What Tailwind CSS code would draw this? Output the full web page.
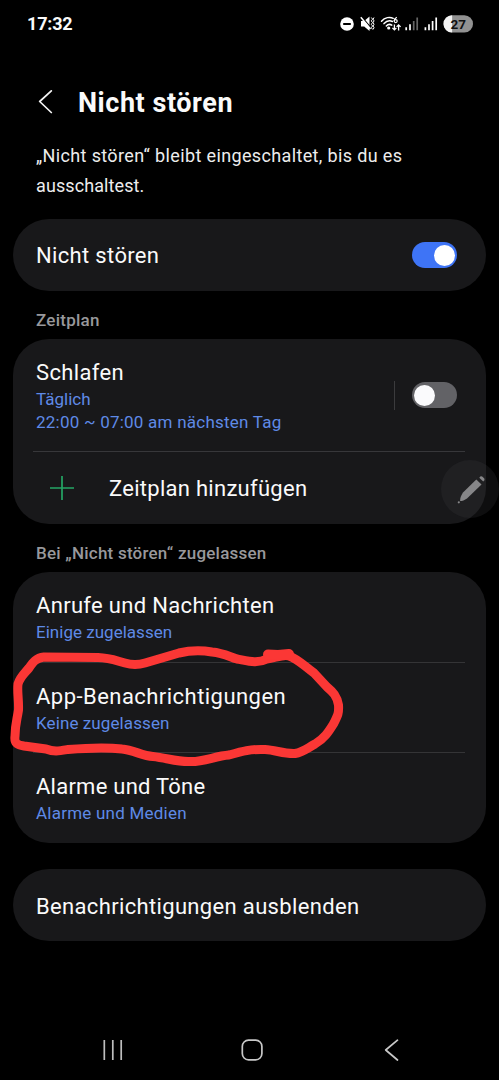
<!DOCTYPE html>
<html lang="de">
<head>
<meta charset="utf-8">
<title>Nicht stören</title>
<script src="https://cdn.jsdelivr.net/npm/@tailwindcss/browser@4"></script>
</head>
<body class="bg-black">
<div class="relative flex h-[1080px] w-[499px] flex-col overflow-hidden bg-black font-[Roboto,sans-serif] text-[#fafafa]">
  <!-- Status bar -->
  <header class="flex h-12 shrink-0 items-center justify-between pr-[25px] pl-[27px]">
    <span class="text-[18px] leading-6 font-bold tracking-[-0.2px]">17:32</span>
    <svg class="h-10 w-[134px]" viewBox="340 4 134 40" fill="none">
      <circle cx="347" cy="24" r="6.8" fill="#fff"/>
      <path d="M343.2 24h7.6" stroke="#000" stroke-width="2"/>
      <path d="M361 21h3.200L369.500 16.500v14.500l-5.300-4.500H361z" fill="#fff"/>
      <path d="M361.800 16.800 371.500 28.500" stroke="#000" stroke-width="1.300"/>
      <path d="M360.800 17.200 370.500 29" stroke="#fff" stroke-width="1.500"/>
      <path d="M371.300 17.500l1.300 1.700-1.300 1.700 1.300 1.700-1.300 1.700 1.300 1.700-1.300 1.700 1.300 1.700M374 17.500l-.9 1.700.9 1.700-.9 1.700.9 1.700-.9 1.700.9 1.700-.9 1.700" stroke="#fff" stroke-width="1"/>
      <path d="M381.5 21.2C384.8 17.2 390 16.6 393.2 18.3M384 23.6C386.5 20.8 390 20.3 392.5 21.5M386.3 26C388 24.2 390 24 391.8 25.2" stroke="#fff" stroke-width="1.5" stroke-linecap="round"/>
      <circle cx="388.7" cy="28" r="1.6" fill="#fff"/>
      <path d="M396.8 17.3C394.8 18.3 394.1 19.6 394.1 21" stroke="#fff" stroke-width="1.2"/>
      <circle cx="395.7" cy="21.1" r="1.5" stroke="#fff" stroke-width="1.2"/>
      <path d="M394.4 24.5v5.4m-2-2 2 2 2-2M398.6 30.5v-5.6m-2 2 2-2 2 2" stroke="#fff" stroke-width="1.3"/>
      <path d="M406.2 27.3v3M410 24.3v6" stroke="#fff" stroke-width="1.7"/>
      <path d="M413.7 21v9.3M417.2 17.5v12.8" stroke="#666" stroke-width="1.7"/>
      <path d="M425.4 27.3v3M429 24.3v6M432.6 21v9.3M436.2 17.5v12.8" stroke="#fff" stroke-width="1.7"/>
      <rect x="443.5" y="15.3" width="29.5" height="17.2" rx="8.6" fill="#929292"/>
      <path d="M452.100 15.300a8.600 8.600 0 0 0 0 17.200z" fill="#f4f4f4"/>
      <text x="458.2" y="29" text-anchor="middle" font-family="Roboto" font-size="13.5" font-weight="700" fill="#111">27</text>
    </svg>
  </header>

  <!-- Title -->
  <div class="mt-[30px] flex h-12 shrink-0 items-center pl-[38px]">
    <svg class="h-6 w-4" viewBox="0 0 16 24" fill="none" stroke="#f4f4f4" stroke-width="1.7" stroke-linecap="round" stroke-linejoin="round"><path d="M13.3 .9 1.7 11.5 13.3 22.5"/></svg>
    <h1 class="ml-6 pt-px text-[27px] leading-9 font-bold tracking-[0.55px]">Nicht stören</h1>
  </div>
  <p class="mt-[15px] h-[60px] shrink-0 pl-[36px] text-[18px] leading-[30px] tracking-[0.36px] text-[#ededed]">„Nicht stören“ bleibt eingeschaltet, bis du es<br><span class="tracking-[0.1px]">ausschaltest.</span></p>

  <main class="mx-[13px] mt-[18px] flex flex-col text-[22px] leading-[30px] tracking-[0.34px]">
    <section class="flex h-[72px] items-center justify-between rounded-[36px] bg-[#18181a] pr-[29px] pl-[23px]">
      <span class="pt-0.5">Nicht stören</span>
      <span class="flex h-[26px] w-[45px] items-center justify-end rounded-full bg-[#3e74f6] pr-[2px]"><span class="size-[21px] rounded-full bg-white"></span></span>
    </section>

    <h2 class="flex h-12 items-center pt-[10px] pb-px pl-[23px] text-[17px] leading-6 font-medium tracking-[0.25px] text-[#98989b]">Zeitplan</h2>
    <section class="flex h-[185px] flex-col rounded-[36px] bg-[#18181a]">
      <div class="flex h-[112px] items-center pr-[29px] pl-[23px]">
        <div class="grow pt-0.5">
          <div>Schlafen</div>
          <div class="text-[17px] leading-[23px] tracking-[0.23px] text-[#5f8ae6]"><span class="tracking-[0px]">Täglich</span><br>22:00 ~ 07:00 am nächsten Tag</div>
        </div>
        <span class="mr-[17px] h-[29px] w-px bg-[#3b3b3d]"></span>
        <span class="flex h-[26px] w-[45px] items-center rounded-full bg-[#626266] pl-[2px]"><span class="size-[21px] rounded-full bg-[#fafafc]"></span></span>
      </div>
      <div class="mr-[21px] ml-5 h-px bg-[#37373a]"></div>
      <div class="flex grow items-center pl-[37px]">
        <svg class="size-6" viewBox="0 0 24 24" stroke="#25a565" stroke-width="1.7"><path d="M0 12h24M12 0v24"/></svg>
        <span class="ml-[35px] pt-0.5 tracking-[0.28px]">Zeitplan hinzufügen</span>
      </div>
    </section>

    <h2 class="flex h-12 items-center pt-[10px] pb-px pl-[23px] text-[17px] leading-6 font-medium tracking-[0.23px] text-[#98989b]">Bei „Nicht stören“ zugelassen</h2>
    <section class="flex h-[271px] flex-col rounded-[36px] bg-[#18181a]">
      <div class="flex h-[90px] flex-col justify-center pt-0.5 pl-[23px]">
        <div class="leading-[29px] tracking-[0.32px]">Anrufe und Nachrichten</div>
        <div class="text-[17px] leading-6 tracking-[0.02px] text-[#5f8ae6]">Einige zugelassen</div>
      </div>
      <div class="mr-[21px] ml-5 h-px bg-[#343436]"></div>
      <div class="flex h-[90px] flex-col justify-center pt-0.5 pl-[23px]">
        <div class="leading-[29px] tracking-[0.46px]">App-Benachrichtigungen</div>
        <div class="text-[17px] leading-6 tracking-[0.1px] text-[#5f8ae6]">Keine zugelassen</div>
      </div>
      <div class="mr-[21px] ml-5 h-px bg-[#343436]"></div>
      <div class="flex h-[90px] flex-col justify-center pt-px pl-[23px]">
        <div class="leading-[29px] tracking-[0.25px]">Alarme und Töne</div>
        <div class="text-[17px] leading-6 tracking-[0.23px] text-[#5f8ae6]">Alarme und Medien</div>
      </div>
    </section>

    <section class="mt-[26px] flex h-[72px] items-center rounded-[36px] bg-[#18181a] pt-[3px] pl-[23px]">Benachrichtigungen ausblenden</section>
  </main>

  <!-- Navigation bar -->
  <nav class="mt-auto flex h-[60px] shrink-0 items-center pl-[102px]">
    <svg class="h-6 w-[22px]" viewBox="0 0 22 24" stroke="#bdbdbd" stroke-width="1.7"><path d="M2.3 2v20M10.8 2v20M19.2 2v20"/></svg>
    <svg class="ml-[116px] size-6" viewBox="0 0 24 24" fill="none" stroke="#c8c8c8" stroke-width="1.7"><rect x="2.3" y="2.2" width="19.6" height="19.6" rx="6.2"/></svg>
    <svg class="ml-[120px] h-6 w-4" viewBox="0 0 16 24" fill="none" stroke="#c8c8c8" stroke-width="1.7" stroke-linecap="round" stroke-linejoin="round"><path d="M13.500 2.200 1.700 12 13.500 22"/></svg>
  </nav>

  <!-- Floating edit button -->
  <div class="absolute top-[460px] left-[441px] size-[58px] rounded-full bg-[#39393b]/25">
    <svg class="size-[58px]" viewBox="441 460 58 58" fill="#868688">
      <path d="M476.3 479.500 481.500 484.600 467 498.500C464.700 500.200 462.200 501.100 460.100 501.100 460 498.300 461 495.300 463 492.500z"/>
      <path d="M479.3 477.8Q480.9 475.3 482.8 477L484.2 478.4Q485.5 480 483.2 481.6z"/>
      <circle cx="458.8" cy="502.3" r="1.1"/>
    </svg>
  </div>

  <!-- Hand-drawn marker -->
  <svg class="pointer-events-none absolute top-0 left-0 h-[1080px] w-[499px]" viewBox="0 0 499 1080" fill="none" stroke="#fb3735" stroke-width="9" stroke-linecap="round" stroke-linejoin="round">
    <path d="M289 656C284 654 275 658 267 659C257 664 248 661 237 659C228 656 223 653 212 652C200 650 192 650 179 653L145 663C138 665 132 665 125 663C114 660 110 658 98 657.500L44 657C36 658 33 662 29 668C24 674 20 677 18 684C17 692 19 700 18.500 710C17 720 15 725 15 736C14 744 18 745 24 746L46 749C54 752 59 751 68 749.500C86 748 105 747 122 749C134 750 142 756 153 756.500C167 758 177 762 190 761.500C204 762 215 756 229 755C243 751 250 749 265 749.500C276 750 283 754 295 753.500C303 752 306 749 315 744C325 738 329 731 334 723C338 715 339 713 338.500 705C337 696 333 692 327 687L314 673C304 666 298 659 289 656Z"/>
    <path d="M268 654.500 278 655 289 654" stroke-width="10"/>
  </svg>
</div>
</body>
</html>
